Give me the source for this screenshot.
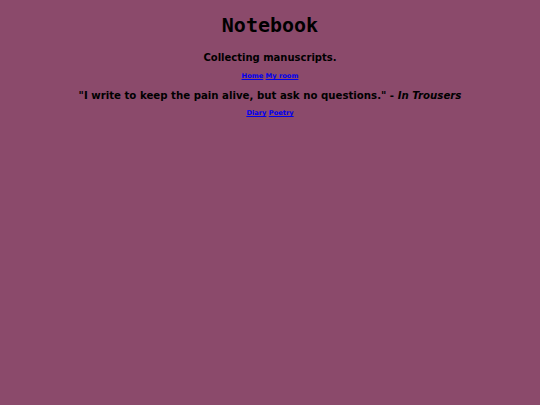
export default function App() {
  return (
    <div className="min-h-[405px] w-full bg-[#8b4a6b] text-black font-['DejaVu_Sans',sans-serif] text-center pt-[12px]">
      <h1 className="font-['DejaVu_Sans_Mono',monospace] font-bold text-[20px] leading-[26px]">Notebook</h1>
      <h2 className="mt-[14px] font-bold text-[10px] leading-[12px]">Collecting manuscripts.</h2>
      <nav className="mt-[8px] text-[6.7px] font-bold leading-[8px]">
        <a href="#" className="text-[#0000ee] underline">Home</a>{' '}
        <a href="#" className="text-[#0000ee] underline">My room</a>
      </nav>
      <p className="mt-[9px] font-bold text-[10.2px] leading-[13px]">
        "I write to keep the pain alive, but ask no questions." - <em>In Trousers</em>
      </p>
      <nav className="mt-[7px] text-[6.7px] font-bold leading-[8px]">
        <a href="#" className="text-[#0000ee] underline">Diary</a>{' '}
        <a href="#" className="text-[#0000ee] underline">Poetry</a>
      </nav>
    </div>
  )
}
